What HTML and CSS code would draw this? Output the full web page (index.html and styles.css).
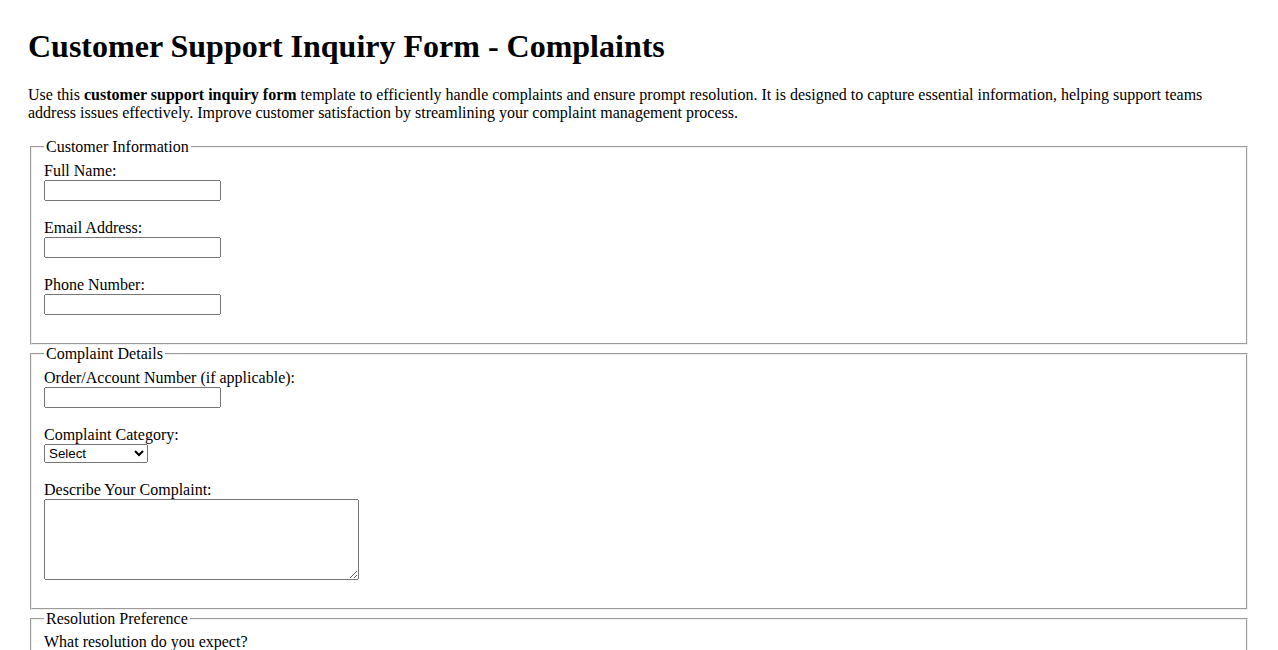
FILE: index.html
```html
<!DOCTYPE html>
<html lang="en">
<head>
<meta charset="UTF-8" />
<meta name="viewport" content="width=device-width, initial-scale=1" />
<title>Customer Support Inquiry Form - Complaints</title>
<link rel="stylesheet" href="styles.css">
</head>
<body>
  <h1>Customer Support Inquiry Form - Complaints</h1>
  <p>Use this <strong>customer support inquiry form</strong> template to efficiently handle complaints and ensure prompt resolution. It is designed to capture essential information, helping support teams address issues effectively. Improve customer satisfaction by streamlining your complaint management process.</p>

  <form id="complaintForm">
    <fieldset>
      <legend>Customer Information</legend>
      <label for="fullName">Full Name:</label><br>
      <input type="text" id="fullName" name="fullName" required><br><br>

      <label for="email">Email Address:</label><br>
      <input type="email" id="email" name="email" required><br><br>

      <label for="phone">Phone Number:</label><br>
      <input type="tel" id="phone" name="phone"><br><br>
    </fieldset>

    <fieldset>
      <legend>Complaint Details</legend>
      <label for="orderNumber">Order/Account Number (if applicable):</label><br>
      <input type="text" id="orderNumber" name="orderNumber"><br><br>

      <label for="category">Complaint Category:</label><br>
      <select id="category" name="category" required>
        <option value="">Select</option>
        <option value="product">Product Issue</option>
        <option value="service">Service Issue</option>
        <option value="billing">Billing Issue</option>
        <option value="other">Other</option>
      </select><br><br>

      <label for="description">Describe Your Complaint:</label><br>
      <textarea id="description" name="description" rows="5" cols="40" required></textarea><br><br>
    </fieldset>

    <fieldset>
      <legend>Resolution Preference</legend>
      <p class="question">What resolution do you expect?</p>
      <input type="radio" id="refund" name="resolution" value="refund">
      <label for="refund">Refund</label><br>
      <input type="radio" id="replacement" name="resolution" value="replacement">
      <label for="replacement">Replacement</label><br>
      <input type="radio" id="repair" name="resolution" value="repair">
      <label for="repair">Repair</label><br><br>
    </fieldset>

    <button type="submit">Submit Complaint</button>
  </form>
</body>
</html>
```

FILE: styles.css
```css
body {
  margin: 0;
  padding: 28px;
  font-family: "Liberation Serif", "Times New Roman", serif;
  font-size: 16px;
  color: #000;
  background: #fff;
}
h1 {
  margin-top: 0;
  font-size: 2em;
}
fieldset {
  margin: 0 2px;
}
input[type="text"], input[type="email"], input[type="tel"] {
  width: 177px;
  height: 21px;
  box-sizing: border-box;
}
select {
  width: 104px;
  height: 19px;
  font-family: "Liberation Sans", Arial, sans-serif;
  font-size: 13.33px;
}
textarea {
  width: 315px;
  height: 81px;
  box-sizing: border-box;
  vertical-align: bottom;
}
.question {
  margin: 0 0 8px;
}
```
